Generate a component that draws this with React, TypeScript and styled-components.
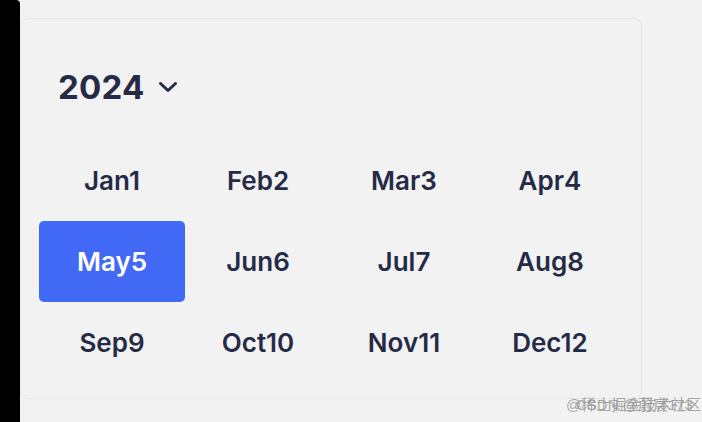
import React from 'react'
import styled, { createGlobalStyle } from 'styled-components'

const GlobalStyle = createGlobalStyle`
  html, body {
    margin: 0;
    padding: 0;
    background: #f2f2f2;
  }
  body {
    font-family: Inter, "Noto Sans", "Liberation Sans", sans-serif;
  }
`

const Screen = styled.div`
  position: relative;
  display: flex;
  width: 702px;
  height: 422px;
  overflow: hidden;
  background: #f2f2f2;
`

const Bezel = styled.div`
  width: 20px;
  flex-shrink: 0;
  background: #000;
  border-top-right-radius: 4px;
`

const Content = styled.div`
  padding-top: 18px;
`

const Card = styled.div`
  box-sizing: border-box;
  width: 622px;
  height: 381px;
  padding: 0 18px 16px 18px;
  border: 1.5px solid #e3e7f0;
  border-radius: 8px;
  background: #f2f2f2;
`

const Header = styled.div`
  box-sizing: border-box;
  display: flex;
  align-items: center;
  gap: 14px;
  height: 121px;
  padding: 14px 0 0 19px;
  color: #252b47;
  cursor: pointer;
`

const Year = styled.span`
  font-size: 33px;
  font-weight: 700;
  letter-spacing: 0.2px;
`

const Grid = styled.div`
  display: grid;
  grid-template-columns: repeat(4, 146px);
  grid-auto-rows: 81px;
`

const Month = styled.div<{ $active?: boolean }>`
  display: flex;
  align-items: center;
  justify-content: center;
  font-size: 26px;
  font-weight: 600;
  border-radius: 5px;
  color: ${({ $active }) => ($active ? '#fff' : '#252b47')};
  background: ${({ $active }) => ($active ? '#4169f6' : 'transparent')};
  cursor: pointer;
`

const Watermark = styled.div`
  position: absolute;
  left: 566px;
  top: 396px;
  font-family: "Liberation Sans", "Noto Sans CJK SC", sans-serif;
  font-size: 15px;
  line-height: 18px;
  color: rgba(140, 140, 140, 0.75);
  white-space: nowrap;
`

const Mark = styled.span<{ $dx: number }>`
  position: absolute;
  left: ${({ $dx }) => $dx}px;
  top: 0;
`

const Chevron = () => (
  <svg width="20" height="14" viewBox="0 0 20 14" fill="none">
    <path d="M2.5 3.5 L10 10.5 L17.5 3.5" stroke="#252b47" strokeWidth="3" strokeLinecap="round" strokeLinejoin="round" />
  </svg>
)

const months = ['Jan', 'Feb', 'Mar', 'Apr', 'May', 'Jun', 'Jul', 'Aug', 'Sep', 'Oct', 'Nov', 'Dec']

export default function App() {
  const selected = 4
  return (
    <>
      <GlobalStyle />
      <Screen>
        <Bezel />
        <Content>
          <Card>
            <Header>
              <Year>2024</Year>
              <Chevron />
            </Header>
            <Grid>
              {months.map((m, i) => (
                <Month key={m} $active={i === selected}>
                  {m}
                  {i + 1}
                </Month>
              ))}
            </Grid>
          </Card>
        </Content>
        <Watermark>
          <Mark $dx={10}>CSDN @蔚宸173</Mark>
          <Mark $dx={0}>@稀土掘金技术社区</Mark>
        </Watermark>
      </Screen>
    </>
  )
}
